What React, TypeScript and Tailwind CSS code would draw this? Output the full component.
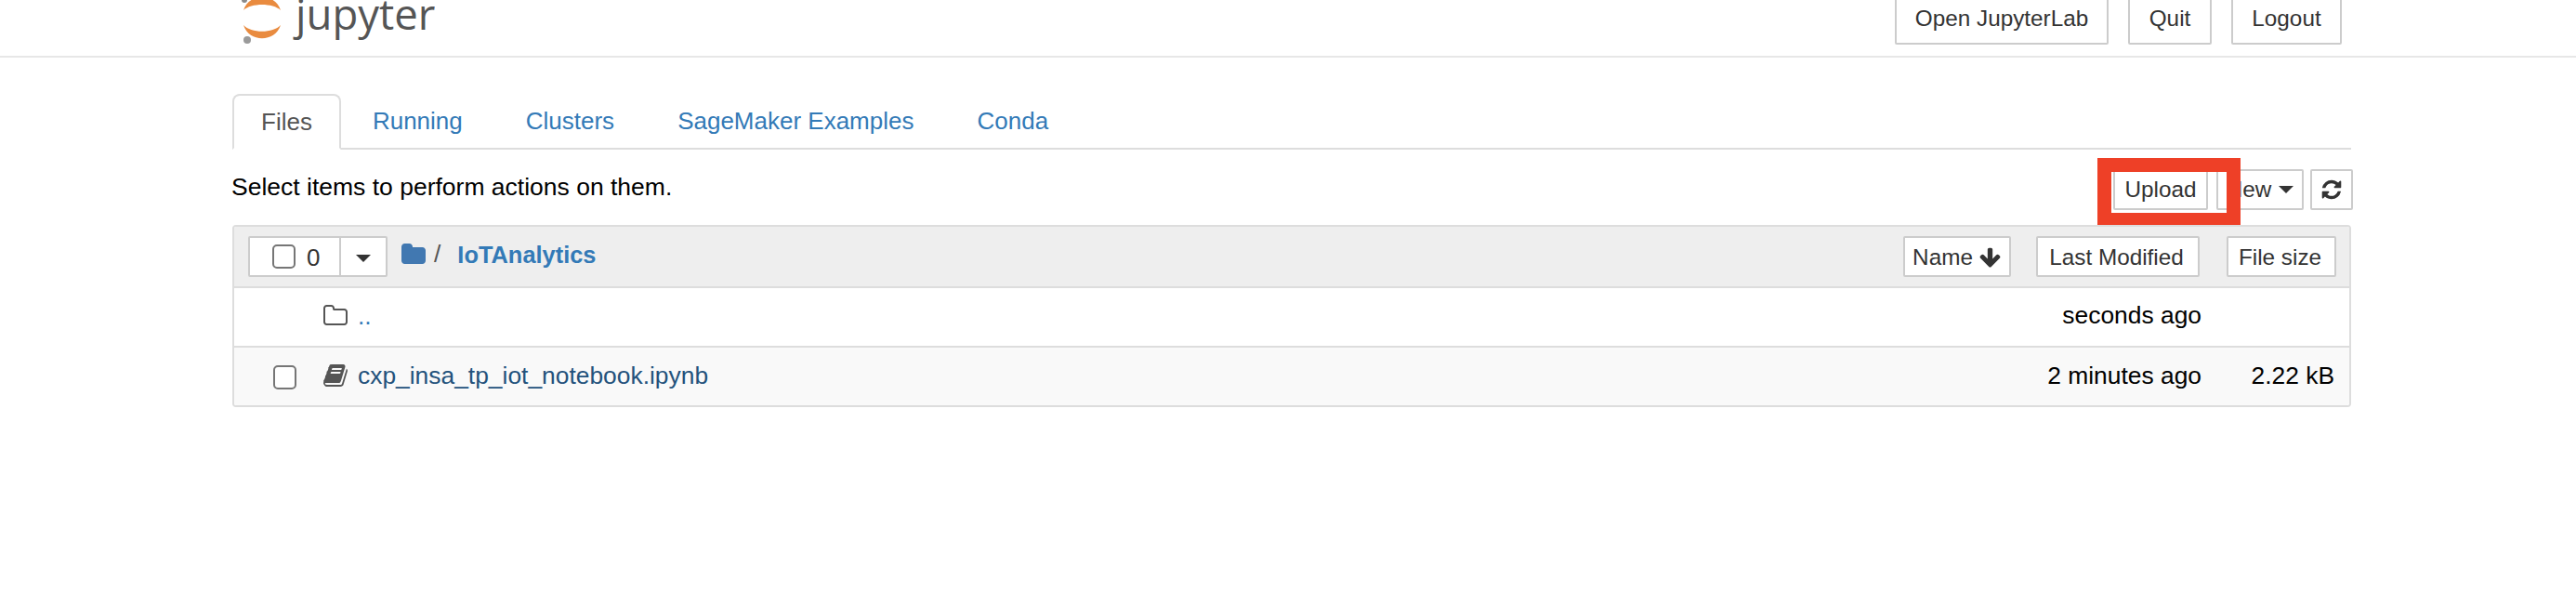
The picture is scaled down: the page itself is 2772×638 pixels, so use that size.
import type { ReactNode } from "react";

const sans = "font-['Liberation_Sans',Arial,sans-serif]";

const paths = {
  refresh:
    "M1639 1056q0 5-1 7-64 268-268 434.5t-478 166.5q-146 0-282.5-55t-243.5-157l-129 129q-19 19-45 19t-45-19-19-45v-448q0-26 19-45t45-19h448q26 0 45 19t19 45-19 45l-137 137q71 66 161 102t187 36q134 0 250-65t186-179q11-17 53-117 8-23 30-23h192q13 0 22.5 9.5t9.5 22.5zm25-800v448q0 26-19 45t-45 19h-448q-26 0-45-19t-19-45 19-45l138-138q-148-137-349-137-134 0-250 65t-186 179q-11 17-53 117-8 23-30 23h-199q-13 0-22.5-9.5t-9.5-22.5v-7q65-268 270-434.5t480-166.5q146 0 284 55.5t245 156.5l130-129q19-19 45-19t45 19 19 45z",
  arrow:
    "M1675 832q0 53-37 90l-651 652q-39 37-91 37-53 0-90-37l-651-652q-38-36-38-90 0-53 38-91l74-75q39-37 91-37 53 0 90 37l294 294v-704q0-52 38-90t90-38h128q52 0 90 38t38 90v704l294-294q37-37 90-37 52 0 91 37l75 75q37 39 37 91z",
  book:
    "M1703 478q40 57 18 129l-275 906q-19 64-76.5 107.5t-122.5 43.5h-923q-77 0-148.5-53.5t-99.5-131.5q-24-67-2-127 0-4 3-27t4-37q1-8-3-21.5t-3-19.5q2-11 8-21t16.5-23.5 16.5-23.5q23-38 45-91.5t30-91.5q3-10 .5-30t-.5-28q3-11 17-28t17-23q21-36 42-92t25-90q1-9-2.5-32t.5-28q4-13 22-30.5t22-22.5q19-26 42.5-84.5t27.5-96.5q1-8-3-25.5t-2-26.5q2-8 9-18t18-23 17-21q8-12 16.5-30.5t15-35 16-36 19.5-32 26.5-23.5 36-11.5 47.5 5.5l-1 3q38-9 51-9h761q74 0 114 56t18 130l-274 906q-36 119-71.5 153.5t-128.5 34.5h-869q-27 0-38 15-11 16-1 43 24 70 144 70h923q29 0 56-15.5t35-41.5l300-987q7-22 5-57 38 15 59 43zm-1064 2q-4 13 2 22.5t20 9.5h608q13 0 25.5-9.5t16.5-22.5l21-64q4-13-2-22.5t-20-9.5h-608q-13 0-25.5 9.5t-16.5 22.5zm-83 256q-4 13 2 22.5t20 9.5h608q13 0 25.5-9.5t16.5-22.5l21-64q4-13-2-22.5t-20-9.5h-608q-13 0-25.5 9.5t-16.5 22.5z",
  folderO:
    "M1600 1312v-704q0-40-28-68t-68-28h-704q-40 0-68-28t-28-68v-64q0-40-28-68t-68-28h-320q-40 0-68 28t-28 68v960q0 40 28 68t68 28h1216q40 0 68-28t28-68zm128-704v704q0 92-66 158t-158 66h-1216q-92 0-158-66t-66-158v-960q0-92 66-158t158-66h320q92 0 158 66t66 158v32h672q92 0 158 66t66 158z",
  folder:
    "M1728 608v704q0 92-66 158t-158 66h-1216q-92 0-158-66t-66-158v-960q0-92 66-158t158-66h320q92 0 158 66t66 158v32h672q92 0 158 66t66 158z",
};

function Fa({ d, className = "" }: { d: string; className?: string }) {
  return (
    <svg viewBox="0 0 1792 1792" className={className} fill="currentColor">
      <path d={d} />
    </svg>
  );
}

function Caret({ className = "" }: { className?: string }) {
  return (
    <svg viewBox="0 0 16 8" className={`h-[8px] w-[16px] ${className}`} fill="#333">
      <path d="M0 0h16L8 8z" />
    </svg>
  );
}

function Btn({ children, className = "" }: { children: ReactNode; className?: string }) {
  return (
    <div className={`flex h-[44px] items-center justify-center rounded-[2px] border-2 border-[#ccc] bg-white text-[24.3px] text-[#333] ${className}`}>
      {children}
    </div>
  );
}

function Logo() {
  return (
    <div className="flex items-start">
      <svg width="44" height="48" viewBox="0 0 44 48" className="shrink-0">
        <path d="M2 11 C8 -8 36 -8 42 11 C34 3 10 3 2 11 Z" fill="#e98b3f" />
        <path d="M2 27 C8 46 36 46 42 27 C34 36 10 36 2 27 Z" fill="#e98b3f" />
        <circle cx="6" cy="43" r="4" fill="#9a9a9a" />
        <circle cx="3" cy="0" r="3" fill="#8a8a8a" />
      </svg>
      <span className="ml-[14px] mt-[-16px] font-['Open_Sans',sans-serif] text-[45.5px] leading-[60px] font-normal text-[#555]">jupyter</span>
    </div>
  );
}

function Tab({ label, active = false }: { label: string; active?: boolean }) {
  return active ? (
    <div className="mb-[-2px] mr-[2px] flex h-[60px] items-center rounded-t-[8px] border-2 border-[#ddd] border-b-white bg-white px-[29px] text-[26px] text-[#555]">
      {label}
    </div>
  ) : (
    <div className="mr-[4px] flex h-[58px] items-center border-2 border-transparent px-[30px] text-[26px] text-[#337ab7]">{label}</div>
  );
}

function Check({ className = "" }: { className?: string }) {
  return <div className={`h-[26px] w-[25px] rounded-[5px] border-2 border-[#767676] bg-white ${className}`} />;
}

export default function App() {
  return (
    <div className={`relative h-[638px] w-[2772px] overflow-hidden bg-white ${sans} text-[26.4px] text-black`}>
      <header className="flex h-[62px] items-end justify-between border-b-2 border-[#e7e7e7] pl-[260px] pr-[252px]">
        <div className="h-[60px] self-start overflow-hidden">
          <Logo />
        </div>
        <div className="mb-[12px] flex gap-[21px]">
          <Btn className="h-[60px] w-[230px] pt-[5px]">Open JupyterLab</Btn>
          <Btn className="h-[60px] w-[90px] pt-[5px]">Quit</Btn>
          <Btn className="h-[60px] w-[119px] pt-[5px]">Logout</Btn>
        </div>
      </header>

      <main className="ml-[250px] mr-[242px] w-[2280px]">
        <nav className="mt-[39px] flex h-[60px] border-b-2 border-[#ddd]">
          <Tab label="Files" active />
          <Tab label="Running" />
          <Tab label="Clusters" />
          <Tab label="SageMaker Examples" />
          <Tab label="Conda" />
        </nav>

        <div className="flex h-[81px] items-start justify-between pt-[21px]">
          <span className="ml-[-1px] mt-[1px] text-[26.5px] leading-[36px]">Select items to perform actions on them.</span>
          <div className="mr-[-2px] flex gap-[9px]">
            <Btn className="w-[102px]">Upload</Btn>
            <Btn className="w-[94px] gap-[8px]">
              New
              <Caret />
            </Btn>
            <Btn className="ml-[-2px] w-[46px]">
              <Fa d={paths.refresh} className="h-[24px] w-[24px] text-[#333]" />
            </Btn>
          </div>
        </div>

        <section className="rounded-[4px] border-2 border-[#ddd]">
          <div className="flex h-[66px] items-center justify-between rounded-t-[2px] border-b-2 border-[#ddd] bg-[#eee] pl-[15px] pr-[14px]">
            <div className="flex items-center">
              <div className="flex h-[44px] w-[150px] rounded-[2px] border-2 border-[#ccc] bg-white">
                <div className="flex w-[98px] items-center border-r-2 border-[#ccc] pl-[24px]">
                  <Check />
                  <span className="ml-[12px] mt-[2px] text-[26px] text-[#333]">0</span>
                </div>
                <div className="flex flex-1 items-center justify-center">
                  <Caret className="mt-[3px]" />
                </div>
              </div>
              <div className="mb-[4px] ml-[14px] flex items-center">
                <Fa d={paths.folder} className="h-[28px] w-[28px] text-[#4178b1]" />
                <span className="ml-[8px] text-[#555]">/</span>
                <span className="ml-[18px] text-[25.4px] font-bold text-[#337ab7]">IoTAnalytics</span>
              </div>
            </div>
            <div className="flex">
              <Btn className="w-[116px] gap-[6px] pt-[3px]">
                Name
                <Fa d={paths.arrow} className="h-[25px] w-[25px] text-[#333]" />
              </Btn>
              <Btn className="ml-[27px] w-[176px] pr-[3px] pt-[3px]">Last Modified</Btn>
              <Btn className="ml-[29px] w-[118px] pr-[3px] pt-[3px] text-[23.6px]">File size</Btn>
            </div>
          </div>

          <div className="flex h-[64px] items-center border-b-2 border-[#ddd] bg-white pb-[3px] pl-[95px] pr-[16px]">
            <Fa d={paths.folderO} className="h-[28px] w-[28px] text-[#555]" />
            <span className="ml-[10px] mt-[2px] text-[#337ab7]">..</span>
            <span className="ml-auto mr-[143px]">seconds ago</span>
          </div>

          <div className="flex h-[62px] items-center rounded-b-[2px] bg-[#f9f9f9] pl-[42px] pr-[16px]">
            <Check className="mt-[2px]" />
            <Fa d={paths.book} className="mb-[2px] ml-[28px] h-[28px] w-[28px] text-[#555]" />
            <span className="ml-[10px] text-[#23527c]">cxp_insa_tp_iot_notebook.ipynb</span>
            <span className="ml-auto">2 minutes ago</span>
            <span className="w-[143px] text-right">2.22 kB</span>
          </div>
        </section>
      </main>

      <div className="absolute left-[2257px] top-[170px] h-[72px] w-[154px] border-x-[15px] border-b-[13px] border-t-[15px] border-[#ee4027]" />
    </div>
  );
}
